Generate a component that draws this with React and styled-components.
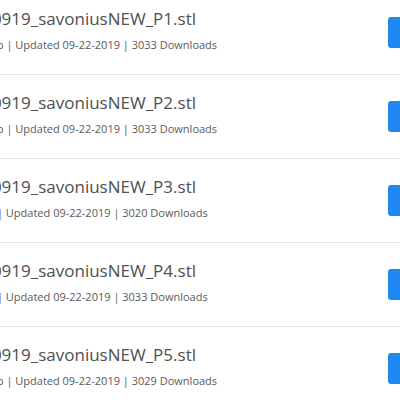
import styled, { createGlobalStyle } from "styled-components";

const GlobalStyle = createGlobalStyle`
  html, body {
    margin: 0;
    padding: 0;
    background: #fff;
    overflow: hidden;
    font-family: "Open Sans", "Liberation Sans", sans-serif;
  }
`;

const FileList = styled.div`
  width: 540px;
  margin-left: -44px;
  margin-top: -9px;
`;

const FileRow = styled.div`
  display: flex;
  justify-content: space-between;
  align-items: flex-start;
  height: 83px;
  padding-right: 14px;
  border-bottom: 1px solid #e8e8e8;
`;

const FileInfo = styled.div`
  padding-top: 16px;
  display: flex;
  flex-direction: column;
`;

const FileName = styled.div`
  margin-left: -3px;
  font-size: 17px;
  line-height: 24px;
  color: #505050;
  white-space: nowrap;
`;

const FileMeta = styled.div`
  margin-top: 5px;
  font-size: 11px;
  line-height: 17px;
  color: #5a5a5a;
  white-space: nowrap;
`;

const DownloadButton = styled.button`
  align-self: center;
  width: 94px;
  height: 31px;
  border: none;
  border-radius: 3px;
  background: #1f88f2;
  color: #fff;
  font-family: inherit;
  font-size: 14px;
  padding: 0 12px;
`;

const files = [
  { part: "P1", size: "12.51 Mb", downloads: 3033 },
  { part: "P2", size: "12.51 Mb", downloads: 3033 },
  { part: "P3", size: "12.9 Kb", downloads: 3020 },
  { part: "P4", size: "12.9 Kb", downloads: 3033 },
  { part: "P5", size: "12.51 Mb", downloads: 3029 },
];

export default function App() {
  return (
    <>
      <GlobalStyle />
      <FileList>
        {files.map((f) => (
          <FileRow key={f.part}>
            <FileInfo>
              <FileName>20190919_savoniusNEW_{f.part}.stl</FileName>
              <FileMeta>
                {f.size} | Updated 09-22-2019 | {f.downloads} Downloads
              </FileMeta>
            </FileInfo>
            <DownloadButton>Download</DownloadButton>
          </FileRow>
        ))}
      </FileList>
    </>
  );
}
